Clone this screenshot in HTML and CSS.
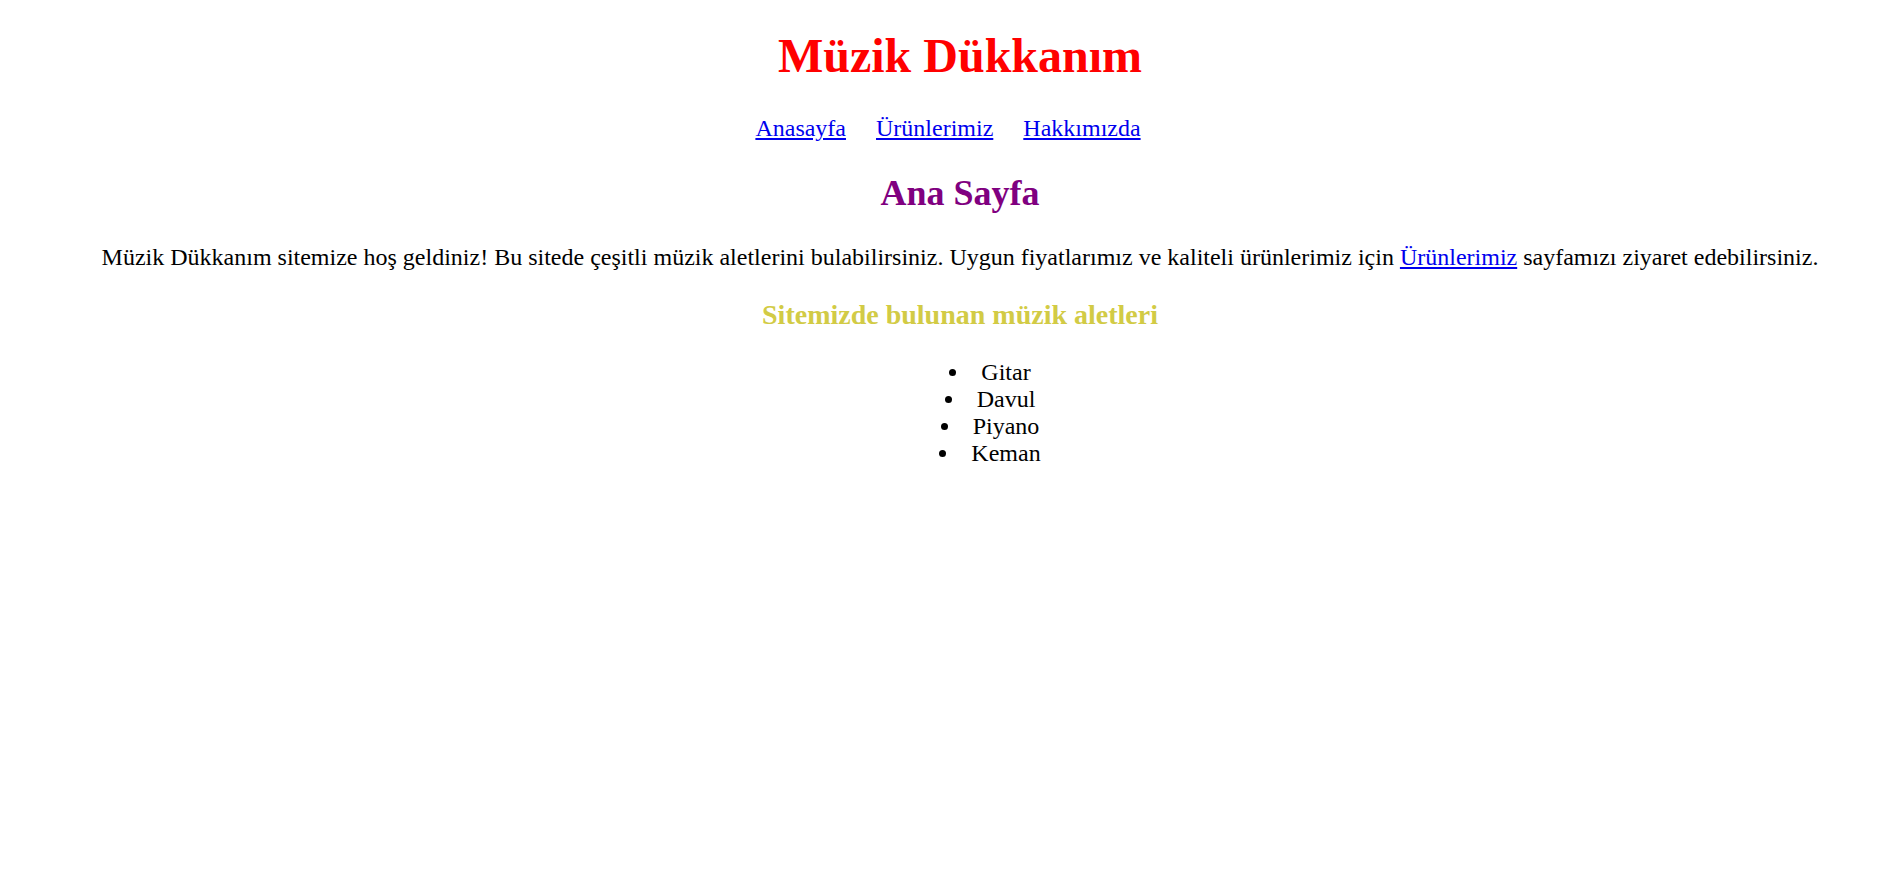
FILE: index.html
```html
<!DOCTYPE html>
<html lang="tr">
<head>
<meta charset="utf-8">
<title>Müzik Dükkanım</title>
<link rel="stylesheet" href="styles.css">
</head>
<body>
<header class="site-header">
  <h1 class="site-title">Müzik Dükkanım</h1>
  <nav class="site-nav">
    <a href="#" class="nav-link">Anasayfa</a>
    <a href="#" class="nav-link">Ürünlerimiz</a>
    <a href="#" class="nav-link">Hakkımızda</a>
  </nav>
</header>
<main class="content">
  <h2 class="page-title">Ana Sayfa</h2>
  <p class="intro">Müzik Dükkanım sitemize hoş geldiniz! Bu sitede çeşitli müzik aletlerini bulabilirsiniz. Uygun fiyatlarımız ve kaliteli ürünlerimiz için <a href="#" class="inline-link">Ürünlerimiz</a> sayfamızı ziyaret edebilirsiniz.</p>
  <h3 class="section-title">Sitemizde bulunan müzik aletleri</h3>
  <ul class="instrument-list">
    <li>Gitar</li>
    <li>Davul</li>
    <li>Piyano</li>
    <li>Keman</li>
  </ul>
</main>
</body>
</html>
```
FILE: styles.css
```css
html {
  overflow: hidden;
  background: #fff;
}
body {
  margin: 8px 8px 8px 45px;
  font-family: "Liberation Serif", "Times New Roman", serif;
  font-size: 24px;
  color: #000;
  text-align: center;
}
.site-title {
  font-size: 48px;
  margin: 20px 0 32px;
  color: #ff0000;
}
.site-nav {
  margin: 0;
}
.nav-link {
  color: #0000ee;
  margin-right: 24px;
}
.page-title {
  font-size: 36px;
  margin: 30px 0;
  color: #800080;
}
.intro {
  margin: 24px 0;
}
.inline-link {
  color: #0000ee;
}
.section-title {
  font-size: 28px;
  margin: 28px 0;
  color: #d2cb45;
}
.instrument-list {
  list-style-position: inside;
  margin: 24px 0;
  padding-left: 60px;
}
```
